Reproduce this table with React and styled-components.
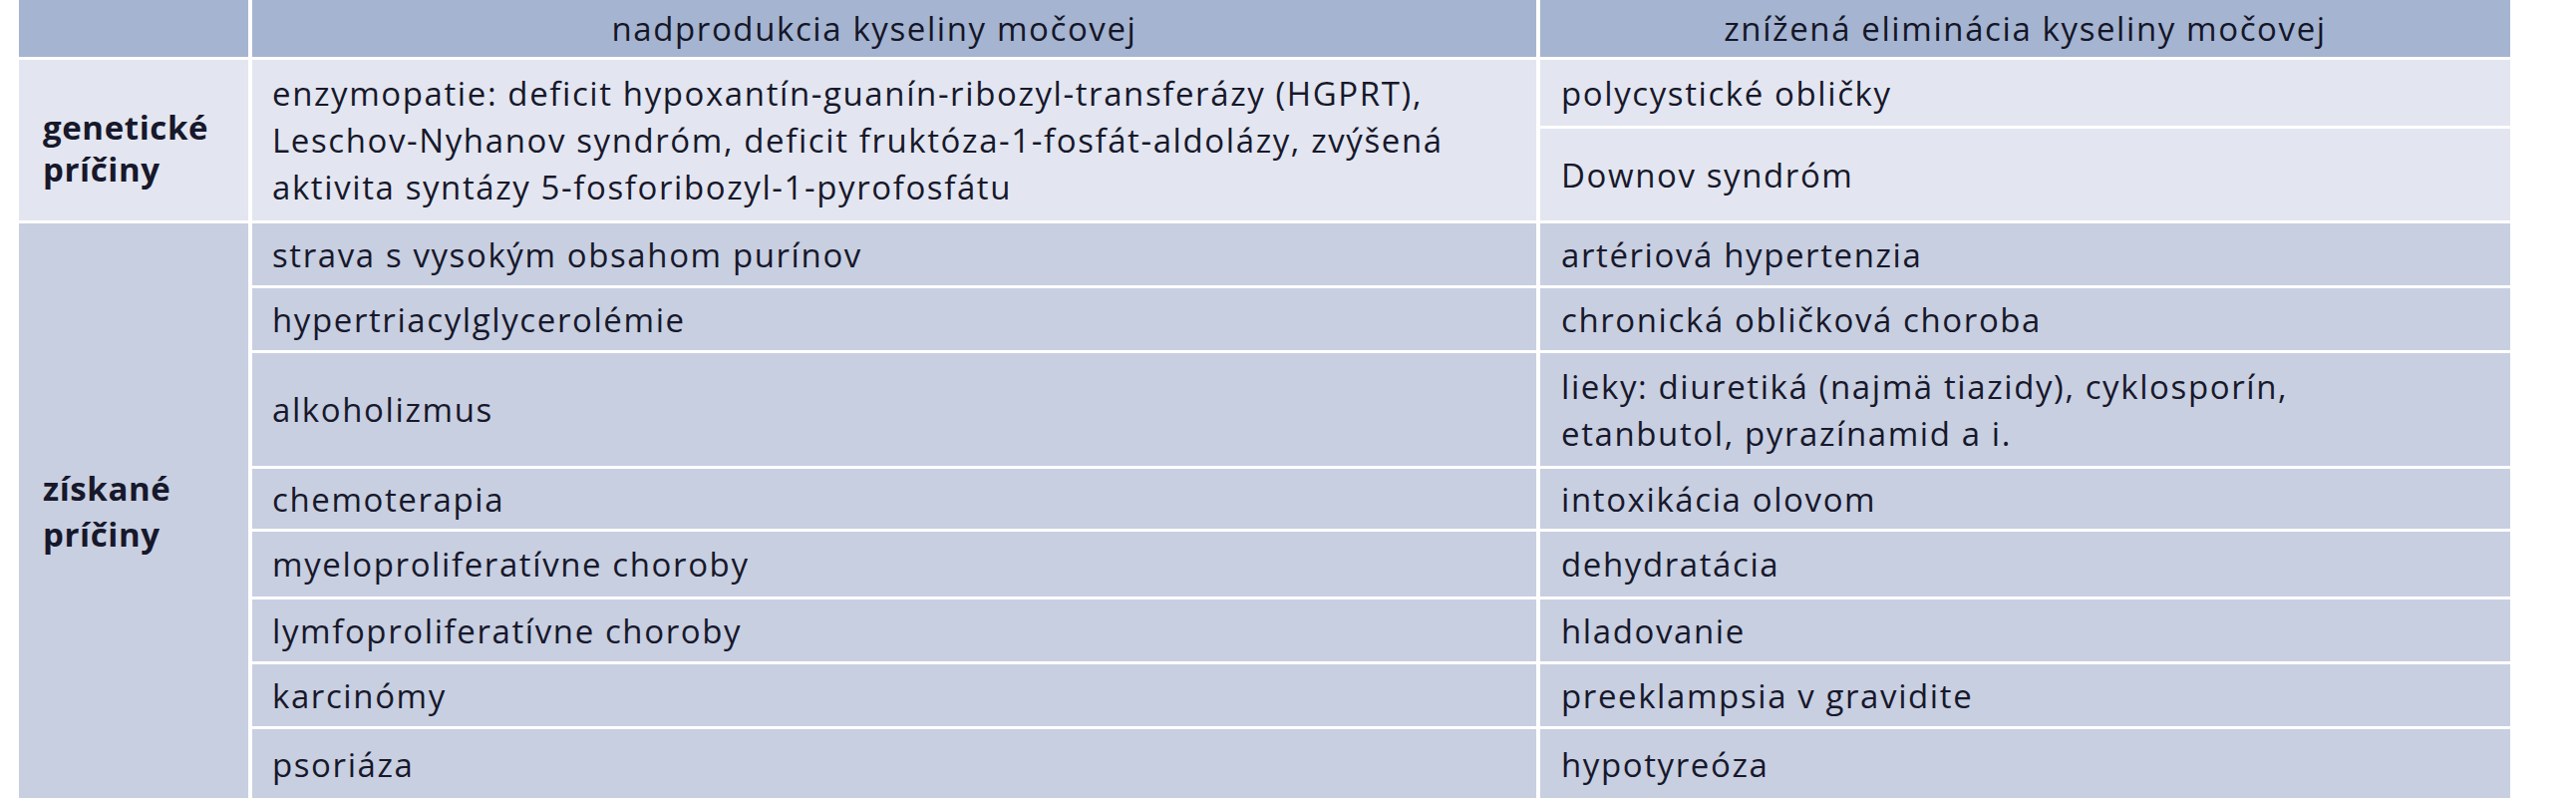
import React from "react";
import styled, { createGlobalStyle } from "styled-components";

const Global = createGlobalStyle`
  html, body {
    margin: 0;
    padding: 0;
    background: #ffffff;
  }
  body {
    width: 2584px;
    height: 800px;
    overflow: hidden;
    font-family: "Open Sans", "Noto Sans", "Liberation Sans", sans-serif;
    color: #17182b;
  }
`;

const Page = styled.div`
  padding-left: 19px;
  height: 800px;
  overflow: hidden;
`;

const Table = styled.div`
  display: grid;
  grid-template-columns: 230px 1288px 973px;
  grid-template-rows: 57px 66px 92px 62px 62px 113px 60px 65px 62px 62px 70px;
  column-gap: 4px;
  row-gap: 3px;
  font-size: 33px;
  line-height: 47px;
  letter-spacing: 1.6px;
`;

const tones = {
  head: "#a5b4d0",
  light: "#e3e6f0",
  mid: "#c8cfe1",
};

const HeadCell = styled.div`
  background: ${tones.head};
  display: flex;
  align-items: center;
  justify-content: center;
  font-weight: 500;
  color: #141628;
  padding-right: ${(p) => (p.$shift ? p.$shift : 0)}px;
`;

const LabelCell = styled.div`
  grid-row: span ${(p) => p.$span};
  background: ${(p) => tones[p.$tone]};
  display: flex;
  align-items: center;
  padding: ${(p) => p.$offset || 0}px 0 0 24px;
  font-weight: 700;
  line-height: ${(p) => p.$lh}px;
  letter-spacing: 0.6px;
`;

const DataCell = styled.div`
  grid-row: span ${(p) => p.$span || 1};
  background: ${(p) => tones[p.$tone]};
  display: flex;
  align-items: center;
  padding-left: ${(p) => p.$pad}px;
  white-space: nowrap;
`;

const genetic = ["polycystické obličky", "Downov syndróm"];

const acquired = [
  ["strava s vysokým obsahom purínov", "artériová hypertenzia"],
  ["hypertriacylglycerolémie", "chronická obličková choroba"],
  [
    "alkoholizmus",
    <>
      lieky: diuretiká (najmä tiazidy), cyklosporín,
      <br />
      etanbutol, pyrazínamid a i.
    </>,
  ],
  ["chemoterapia", "intoxikácia olovom"],
  ["myeloproliferatívne choroby", "dehydratácia"],
  ["lymfoproliferatívne choroby", "hladovanie"],
  ["karcinómy", "preeklampsia v gravidite"],
  ["psoriáza", "hypotyreóza"],
];

export default function App() {
  return (
    <>
      <Global />
      <Page>
        <Table>
          <HeadCell />
          <HeadCell $shift={40}>nadprodukcia kyseliny močovej</HeadCell>
          <HeadCell>znížená eliminácia kyseliny močovej</HeadCell>

          <LabelCell $span={2} $tone="light" $offset={16} $lh={42}>
            <span>
              genetické
              <br />
              príčiny
            </span>
          </LabelCell>
          <DataCell $span={2} $tone="light" $pad={20}>
            <span>
              enzymopatie: deficit hypoxantín-guanín-ribozyl-transferázy (HGPRT),
              <br />
              Leschov-Nyhanov syndróm, deficit fruktóza-1-fosfát-aldolázy, zvýšená
              <br />
              aktivita syntázy 5-fosforibozyl-1-pyrofosfátu
            </span>
          </DataCell>
          <DataCell $tone="light" $pad={21}>
            {genetic[0]}
          </DataCell>
          <DataCell $tone="light" $pad={21}>
            {genetic[1]}
          </DataCell>

          <LabelCell $span={8} $tone="mid" $offset={0} $lh={46}>
            <span>
              získané
              <br />
              príčiny
            </span>
          </LabelCell>
          {acquired.map(([left, right], i) => (
            <React.Fragment key={i}>
              <DataCell $tone="mid" $pad={20}>
                <span>{left}</span>
              </DataCell>
              <DataCell $tone="mid" $pad={21}>
                <span>{right}</span>
              </DataCell>
            </React.Fragment>
          ))}
        </Table>
      </Page>
    </>
  );
}
